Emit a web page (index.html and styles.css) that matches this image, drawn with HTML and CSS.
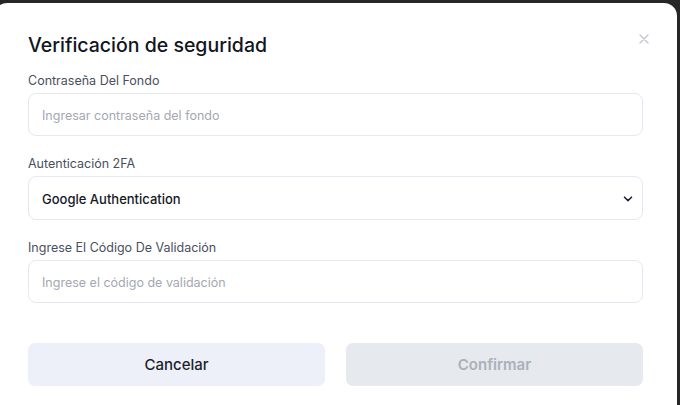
FILE: index.html
```html
<!DOCTYPE html>
<html lang="es">
<head>
  <meta charset="UTF-8" />
  <title>Verificación de seguridad</title>
  <link rel="stylesheet" href="styles.css">
</head>
<body>
  <div class="modal">
    <button class="close-btn" aria-label="Cerrar">
      <svg width="10" height="10" viewBox="0 0 10 10"><path d="M1 1L9 9M9 1L1 9" stroke="#c3c6ce" stroke-width="1.4" fill="none" stroke-linecap="round"/></svg>
    </button>
    <h2 class="modal-title">Verificación de seguridad</h2>

    <div class="field">
      <label class="field-label">Contraseña Del Fondo</label>
      <div class="input-box"><span class="placeholder">Ingresar contraseña del fondo</span></div>
    </div>

    <div class="field">
      <label class="field-label">Autenticación 2FA</label>
      <div class="input-box select-box">
        <span class="value">Google Authentication</span>
        <svg width="10" height="6" viewBox="0 0 10 6"><path d="M1.5 1.2L5 4.6L8.5 1.2" stroke="#1f2433" stroke-width="1.6" fill="none" stroke-linecap="round" stroke-linejoin="round"/></svg>
      </div>
    </div>

    <div class="field">
      <label class="field-label">Ingrese El Código De Validación</label>
      <div class="input-box"><span class="placeholder">Ingrese el código de validación</span></div>
    </div>

    <div class="actions">
      <button class="btn btn-cancel">Cancelar</button>
      <button class="btn btn-confirm">Confirmar</button>
    </div>
  </div>
</body>
</html>
```

FILE: styles.css
```css
body {
  margin: 0;
  padding-top: 3px;
  background-color: #262626;
  font-family: Inter, "Noto Sans", sans-serif;
  overflow: hidden;
  height: 405px;
}
.modal {
  position: relative;
  box-sizing: border-box;
  width: 683px;
  margin-left: -6px;
  height: 420px;
  background-color: #fff;
  border-radius: 13px;
  padding: 28px 34px 0;
}
.close-btn {
  position: absolute;
  top: 29px;
  right: 28px;
  background: none;
  border: none;
  padding: 0;
  cursor: pointer;
}
.modal-title {
  margin: 0 0 12px;
  font-size: 19.5px;
  line-height: 28px;
  font-weight: 500;
  color: #111521;
}
.field {
  margin-bottom: 18px;
}
.field-label {
  display: block;
  font-size: 12.5px;
  line-height: 18px;
  color: #4a4f5c;
  padding-top: 1px;
  margin-bottom: 3px;
}
.input-box {
  box-sizing: border-box;
  height: 43px;
  border: 1px solid #e6e7f1;
  border-radius: 8px;
  display: flex;
  align-items: center;
  justify-content: space-between;
  padding: 1px 13px 0;
  font-size: 12.5px;
}
.select-box {
  height: 44px;
  padding-right: 9px;
}
.placeholder {
  color: #a4a8b2;
}
.value {
  color: #151925;
  font-size: 13px;
  font-weight: 500;
}
.actions {
  display: flex;
  gap: 21px;
  margin-top: 40px;
}
.btn {
  flex: 1;
  height: 43px;
  border: none;
  border-radius: 7px;
  font-family: Inter, "Noto Sans", sans-serif;
  font-size: 15px;
  font-weight: 500;
  cursor: pointer;
}
.btn-cancel {
  background-color: #eef0f9;
  color: #1b1f2b;
}
.btn-confirm {
  background-color: #e6e9ed;
  color: #aab1bb;
  font-weight: 600;
}
```
